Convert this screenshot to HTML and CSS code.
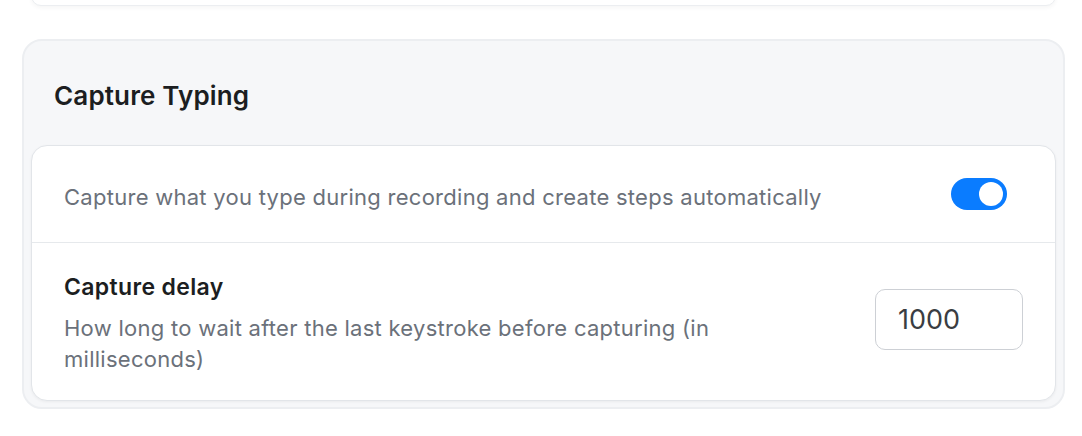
FILE: index.html
```html
<!DOCTYPE html>
<html lang="en">
<head>
<meta charset="utf-8">
<title>Capture Typing</title>
<link rel="stylesheet" href="styles.css">
</head>
<body>
<div class="page">
  <div class="prev-card"></div>
  <section class="section">
    <h2 class="section-title">Capture Typing</h2>
    <div class="card">
      <div class="row row-toggle">
        <p class="row-desc row-desc-single">Capture what you type during recording and create steps automatically</p>
        <div class="toggle" role="switch" aria-checked="true"><span class="knob"></span></div>
      </div>
      <div class="row row-input">
        <div class="row-text">
          <div class="row-title">Capture delay</div>
          <p class="row-desc">How long to wait after the last keystroke before capturing (in milliseconds)</p>
        </div>
        <input class="num-input" type="text" value="1000">
      </div>
    </div>
  </section>
</div>
</body>
</html>
```
FILE: styles.css
```css
* { box-sizing: border-box; }
html, body { margin: 0; padding: 0; background: #ffffff; }
body {
  font-family: Inter, "Noto Sans", "Liberation Sans", sans-serif;
  -webkit-font-smoothing: antialiased;
}
.page {
  padding: 0 17px 0 22px;
}
.prev-card {
  height: 20px;
  margin: -14px 9px 0 9px;
  background: #ffffff;
  border: 1.5px solid #eceef1;
  border-radius: 16px;
  box-shadow: 0 2px 4px rgba(0,0,0,0.04);
}
.section {
  margin-top: 33px;
  background: #f6f7f9;
  border: 2px solid #eceef1;
  border-radius: 20px;
  padding: 0 7px 6px 7px;
}
.section-title {
  margin: 0;
  padding: 40px 0 34px 23px;
  font-size: 26px;
  line-height: 30px;
  font-weight: 600;
  color: #1c1e21;
  letter-spacing: 0.15px;
}
.card {
  background: #ffffff;
  border: 1.5px solid #e2e5e9;
  border-radius: 16px;
  box-shadow: 0 1px 3px rgba(0,0,0,0.05);
}
.row {
  display: flex;
  align-items: center;
  justify-content: space-between;
  padding: 0 32px;
}
.row-toggle {
  height: 97px;
  border-bottom: 1.5px solid #e6e9ec;
}
.row-input {
  padding-top: 29px;
  padding-bottom: 25px;
}
.row-text {
  max-width: 700px;
}
.row-title {
  font-size: 23px;
  line-height: 30px;
  font-weight: 600;
  color: #1c1e21;
  letter-spacing: 0.35px;
  margin-bottom: 11px;
}
.row-desc {
  margin: 0;
  font-size: 22px;
  line-height: 31px;
  color: #6b717a;
  letter-spacing: 0.27px;
}
.row-desc-single {
  margin-top: 7px;
}
.toggle {
  width: 56px;
  height: 32px;
  border-radius: 16px;
  background: #0a7cff;
  margin-right: 16px;
  display: flex;
  align-items: center;
  justify-content: flex-end;
  padding: 4px;
  flex-shrink: 0;
}
.knob {
  width: 24px;
  height: 24px;
  border-radius: 50%;
  background: #ffffff;
}
.num-input {
  width: 148px;
  height: 61px;
  margin-top: -8px;
  border: 1.5px solid #cdd0d5;
  border-radius: 10px;
  padding: 0 0 0 22px;
  font-family: Inter, "Noto Sans", "Liberation Sans", sans-serif;
  font-size: 27px;
  color: #3a3d42;
  background: #ffffff;
  outline: none;
  flex-shrink: 0;
}
```
